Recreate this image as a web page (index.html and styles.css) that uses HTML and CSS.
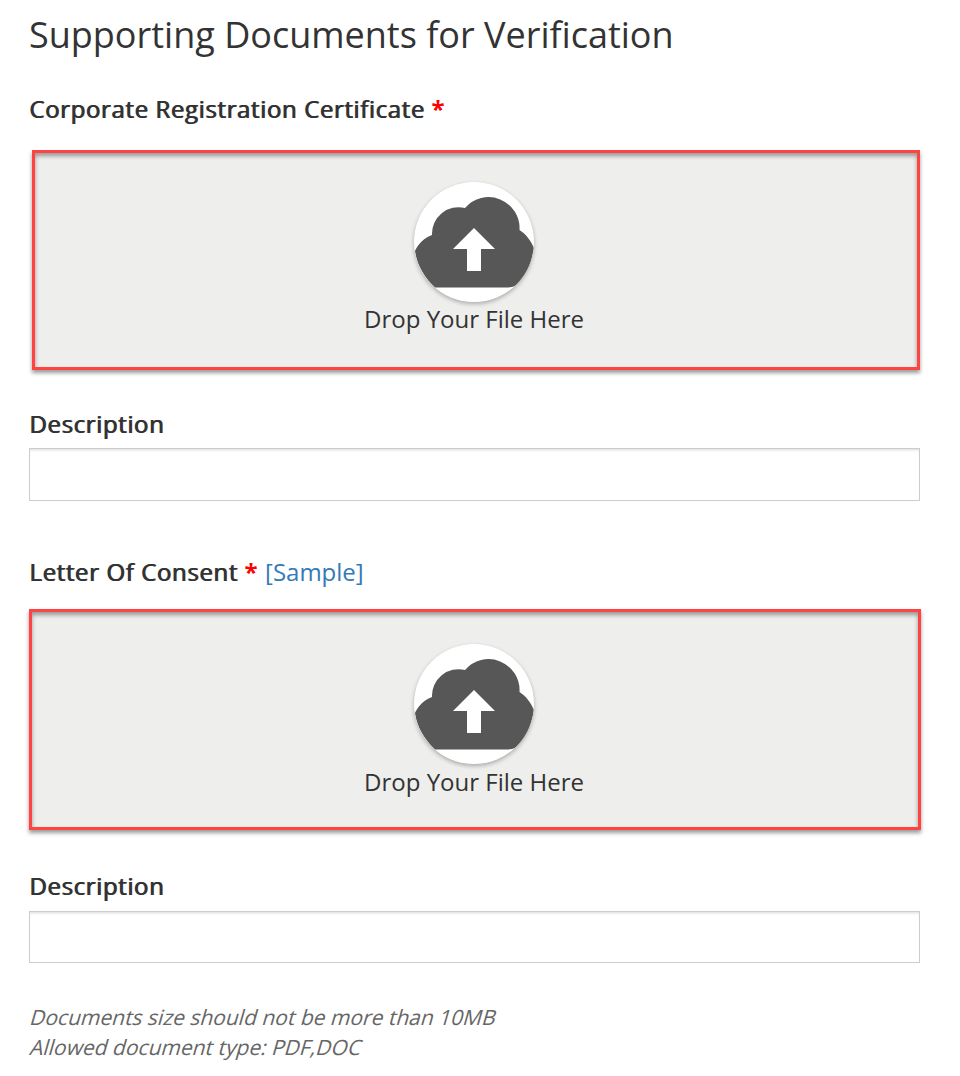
FILE: index.html
```html
<!DOCTYPE html>
<html lang="en">
<head>
<meta charset="utf-8"/>
<title>Supporting Documents</title>
<link rel="stylesheet" href="styles.css">
</head>
<body>
<svg width="0" height="0" class="defs">
    <symbol id="upload" viewBox="0 0 120 120">
        <circle cx="60" cy="60" r="60" fill="#fff"/>
        <path fill="#575757" d="M1 69C4 62 10 56 18 53A26.500 26.500 0 0 1 51 26A31 31 0 0 1 105.500 48C112 52 117 59 120 66C117 84 111 97 101 104Q98 105 94 105.500H21C10 95 3 83 1 69Z"/>
        <path fill="#fff" d="M60 46L81 67H67V89H53V67H39Z"/>
    </symbol>
</svg>
<form id="documents">
    <h1>Supporting Documents for Verification</h1>
    <div class="group">
        <label class="title">Corporate Registration Certificate <span class="required">*</span></label>
        <div class="dropzone first">
            <svg class="icon"><use href="#upload"/></svg>
            <div class="droptext">Drop Your File Here</div>
        </div>
        <label class="desc" for="desc1">Description</label>
        <input type="text" id="desc1"/>
    </div>
    <div class="group">
        <label class="title">Letter Of Consent <span class="required">*</span> <a href="#">[Sample]</a></label>
        <div class="dropzone second">
            <svg class="icon"><use href="#upload"/></svg>
            <div class="droptext">Drop Your File Here</div>
        </div>
        <label class="desc" for="desc2">Description</label>
        <input type="text" id="desc2" class="last"/>
    </div>
    <div class="note">
        <p>Documents size should not be more than 10MB</p>
        <p>Allowed document type: PDF,DOC</p>
    </div>
</form>
</body>
</html>
```
FILE: styles.css
```css
* {
    box-sizing:border-box;
}
body {
    margin:0;
    background:#fff;
    color:#333;
    font-family:"Open Sans", sans-serif;
    font-size:24px;
}
.defs {
    display:block;
}
#documents {
    width:891px;
    margin-left:29px;
}
h1 {
    margin:0;
    padding-top:10px;
    height:93px;
    font-size:36px;
    font-weight:400;
    line-height:50px;
}
label {
    display:block;
    height:32px;
    line-height:32px;
    font-weight:400;
    letter-spacing:.62px;
    text-shadow:1px 0 0 #333;
}
.required {
    color:#f00;
    font-weight:700;
    text-shadow:none;
}
label a {
    color:#337ab7;
    letter-spacing:0;
    text-decoration:none;
    text-shadow:none;
}
.dropzone {
    display:flex;
    flex-direction:column;
    align-items:center;
    height:221px;
    border:3px solid #ff4343;
    background:#eeeeec;
    box-shadow:0 3px 4px rgba(0,0,0,.4), inset 0 3px 4px rgba(0,0,0,.36);
}
.first {
    height:220px;
    margin:25px 0 38px 3px;
    padding:29px 4px 0 0;
}
.second {
    margin:21px -1px 40px 0;
    padding:32px 2px 0 0;
}
.icon {
    width:120px;
    height:120px;
    flex:none;
    border-radius:50%;
    box-shadow:0 2px 4px rgba(0,0,0,.28);
}
.droptext {
    line-height:34px;
}
.second .droptext {
    line-height:36px;
}
input {
    display:block;
    width:100%;
    height:53px;
    margin:8px 0 55px;
    border:1px solid #ccc;
    box-shadow:inset 0 3px 3px -2px rgba(0,0,0,.15);
}
.last {
    height:52px;
    margin-top:9px;
}
.note {
    margin:-16px 0 0 2px;
    font-size:21px;
    line-height:30px;
    color:#666;
}
/* slanted upright face, the real italic is narrower */
.note p {
    margin:0;
    transform:skewX(-16deg);
}
```
